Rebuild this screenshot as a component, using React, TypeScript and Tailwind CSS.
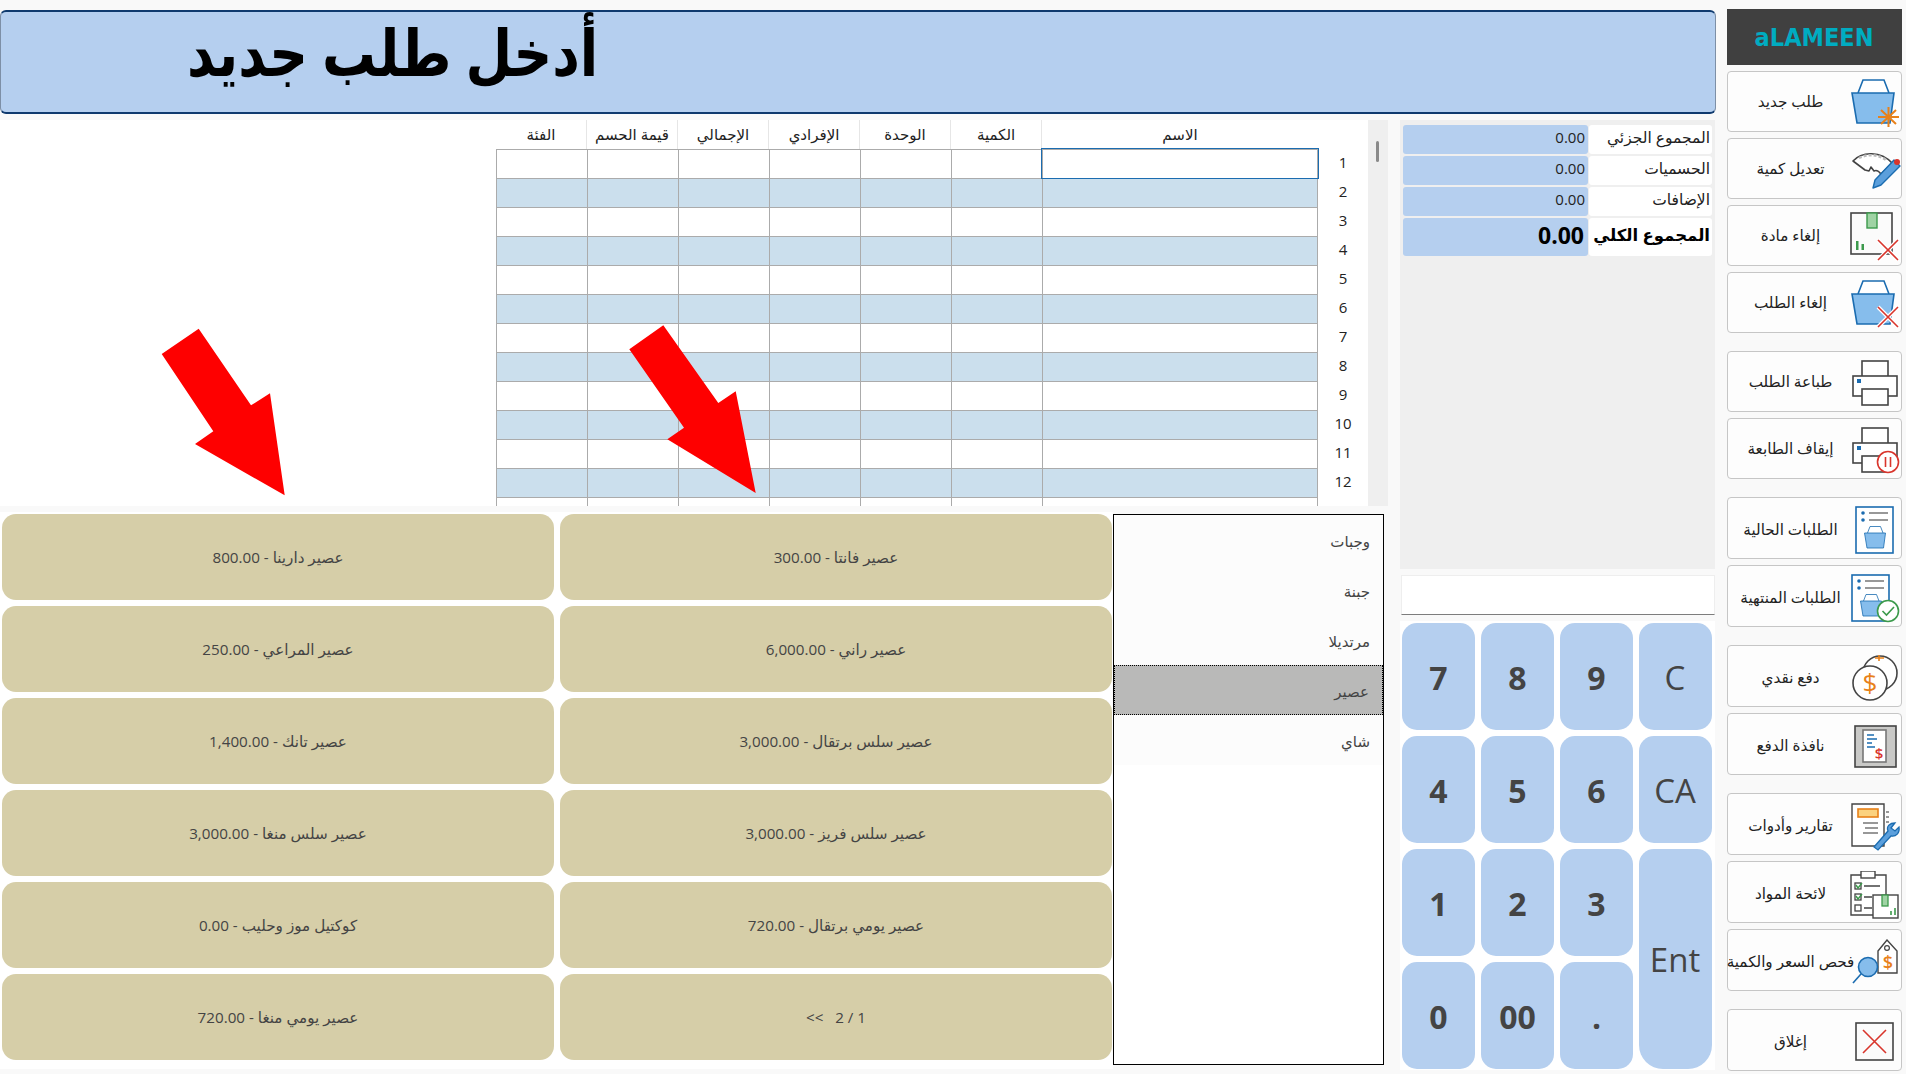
import React from "react";

const F = '"Open Sans","DejaVu Sans",sans-serif';

const products = [
  ["عصير دارينا - 800.00", "عصير فانتا - 300.00"],
  ["عصير المراعي - 250.00", "عصير راني - 6,000.00"],
  ["عصير تانك - 1,400.00", "عصير سلس برتقال - 3,000.00"],
  ["عصير سلس منغا - 3,000.00", "عصير سلس فريز - 3,000.00"],
  ["كوكتيل موز وحليب - 0.00", "عصير يومي برتقال - 720.00"],
  ["عصير يومي منغا - 720.00", "1 / 2   >>"],
];

const Basket = ({ x = 0, y = 0, s = 1 }: { x?: number; y?: number; s?: number }) => (
  <g transform={`translate(${x} ${y}) scale(${s})`}>
    <path d="M7 14 L12 1 H33 L38 14" fill="#fff" stroke="#1b6cb0" strokeWidth="1.6" />
    <path d="M1 14 H43 L39 44 H6 Z" fill="#86bdec" stroke="#1b6cb0" strokeWidth="1.6" />
  </g>
);
const RedX = ({ x, y, s = 20 }: { x: number; y: number; s?: number }) => (
  <g>
    <path d={`M${x} ${y} L${x + s} ${y + s} M${x + s} ${y} L${x} ${y + s}`} stroke="#fff" strokeWidth="4" />
    <path d={`M${x} ${y} L${x + s} ${y + s} M${x + s} ${y} L${x} ${y + s}`} stroke="#d9352c" strokeWidth="1.6" />
  </g>
);
const Printer = () => (
  <g fill="#fff" stroke="#444" strokeWidth="1.6">
    <rect x="12" y="1" width="26" height="16" />
    <rect x="3" y="16" width="44" height="20" />
    <rect x="12" y="29" width="26" height="16" />
    <rect x="7" y="19" width="4" height="4" fill="#1b6cb0" stroke="none" />
  </g>
);
const ListDoc = ({ x }: { x: number }) => (
  <g transform={`translate(${x} 0)`}>
    <rect x="1" y="1" width="37" height="46" fill="#fff" stroke="#1b6cb0" strokeWidth="1.6" />
    <circle cx="8" cy="7" r="1.8" fill="#1b6cb0" />
    <circle cx="8" cy="14" r="1.8" fill="#1b6cb0" />
    <path d="M14 7 H33 M14 14 H33" stroke="#777" strokeWidth="1.4" />
    <Basket x={9} y={20} s={0.5} />
  </g>
);

const icons: Record<string, React.ReactNode> = {
  new: (
    <>
      <Basket x={1} y={1} />
      <path d="M28 39 H49 M38.5 29 V49 M31 32 L46 46 M46 32 L31 46" stroke="#e8811a" strokeWidth="2" />
    </>
  ),
  qty: (
    <>
      <path d="M3 16 C12 6 31 6 42 18 L31 29 C28 25 26 25 24 26 L21 22 L19 26 L15 25 Z" fill="#fff" stroke="#444" strokeWidth="1.6" strokeLinejoin="round" />
      <path d="M9 13 C17 9 28 9 36 15" fill="none" stroke="#bbb" strokeWidth="2.5" strokeDasharray="3 2" />
      <path d="M23 43 L25 35 L44 15 L50 21 L31 40 Z" fill="#5b9fdc" stroke="#1b6cb0" strokeWidth="1.4" strokeLinejoin="round" />
      <circle cx="47" cy="17" r="3" fill="#d9352c" />
    </>
  ),
  cancelItem: (
    <>
      <rect x="1" y="1" width="41" height="41" fill="#fbfbfb" stroke="#444" strokeWidth="1.6" />
      <rect x="17" y="1" width="10" height="15" fill="#9fd3a4" stroke="#3c9a4c" strokeWidth="1.4" />
      <path d="M6 29 h2.5 v9 h-2.5z M11.5 32 h2.5 v6 h-2.5z" fill="#3c9a4c" />
      <RedX x={28} y={28} s={20} />
    </>
  ),
  cancelOrder: (
    <>
      <Basket x={1} y={1} />
      <RedX x={28} y={28} s={20} />
    </>
  ),
  print: <Printer />,
  stop: (
    <>
      <Printer />
      <circle cx="38" cy="35" r="10.5" fill="#fff" stroke="#d9352c" strokeWidth="1.6" />
      <path d="M35.5 30 V40 M40.5 30 V40" stroke="#d9352c" strokeWidth="1.6" />
    </>
  ),
  current: <ListDoc x={5} />,
  done: (
    <>
      <ListDoc x={1} />
      <circle cx="38" cy="37" r="10.5" fill="#fff" stroke="#3c9a4c" strokeWidth="1.6" />
      <path d="M32.5 37 L36.5 41 L44 33" fill="none" stroke="#3c9a4c" strokeWidth="1.6" />
    </>
  ),
  cash: (
    <>
      <circle cx="30" cy="19" r="17" fill="#fff" stroke="#444" strokeWidth="1.6" />
      <path d="M29 1 V7 M25 4 H34" stroke="#e8811a" strokeWidth="1.6" />
      <circle cx="20" cy="29" r="17" fill="#fff" stroke="#444" strokeWidth="1.6" />
      <text x="20" y="38" fontSize="26" textAnchor="middle" fill="#e8811a" fontFamily="Open Sans">$</text>
    </>
  ),
  payWin: (
    <>
      <rect x="1" y="1" width="41" height="41" fill="#c9c9c7" stroke="#444" strokeWidth="1.6" />
      <rect x="9" y="5" width="23" height="32" fill="#fff" stroke="#777" strokeWidth="1.6" />
      <path d="M13 10 h7 M13 14 h10 M13 18 h5 M13 22 h8" stroke="#1b6cb0" strokeWidth="1.6" />
      <text x="25" y="34" fontSize="15" textAnchor="middle" fill="#d9352c" fontFamily="Open Sans" fontWeight="600">$</text>
    </>
  ),
  reports: (
    <>
      <path d="M1 1 H33 V43 H1 Z" fill="#fff" stroke="#444" strokeWidth="1.4" />
      <rect x="7" y="6" width="20" height="8" fill="#fbd27f" stroke="#e8811a" strokeWidth="1.6" />
      <path d="M12 20 H27 M14 25 H27 M12 30 H27 M35 9 H38 M35 14 H38 M35 19 H38" stroke="#777" strokeWidth="1.3" />
      <path d="M23 44 L37 28 C35 23 39 20 44 20 L40 25 L44 28 L48 24 C49 30 45 34 40 33 L27 47 Z" fill="#5b9fdc" stroke="#1b6cb0" strokeWidth="1.3" />
    </>
  ),
  items: (
    <>
      <path d="M1 4 H36 V44 H1 Z" fill="#fff" stroke="#444" strokeWidth="1.4" />
      <rect x="11" y="0" width="14" height="7" fill="#fff" stroke="#444" strokeWidth="1.4" />
      <rect x="5" y="12" width="6" height="6" fill="#fff" stroke="#444" strokeWidth="1.3" />
      <rect x="5" y="23" width="6" height="6" fill="#fff" stroke="#444" strokeWidth="1.3" />
      <rect x="5" y="34" width="6" height="6" fill="#fff" stroke="#444" strokeWidth="1.3" />
      <path d="M6 14 L8 17 L12 12 M6 25 L8 28 L12 23" fill="none" stroke="#3c9a4c" strokeWidth="1.4" />
      <path d="M14 15 H30 M14 26 H22 M14 37 H22" stroke="#444" strokeWidth="1.3" />
      <rect x="23" y="24" width="25" height="23" fill="#fff" stroke="#444" strokeWidth="1.4" />
      <rect x="32" y="24" width="6" height="11" fill="#9fd3a4" stroke="#3c9a4c" strokeWidth="1.3" />
      <path d="M41 44 v-4 M45 44 v-7" stroke="#3c9a4c" strokeWidth="1.6" />
    </>
  ),
  check: (
    <>
      <path d="M28 12 L37 1 L47 12 V34 H28 Z" fill="#fff" stroke="#444" strokeWidth="1.4" />
      <circle cx="37" cy="9" r="2.4" fill="#fff" stroke="#444" strokeWidth="1.2" />
      <text x="38" y="30" fontSize="18" textAnchor="middle" fill="#e8811a" fontFamily="Open Sans" fontWeight="600">$</text>
      <circle cx="18" cy="28" r="9.5" fill="#86bdec" stroke="#1b6cb0" strokeWidth="1.6" />
      <path d="M11 35 L3 44" stroke="#1b6cb0" strokeWidth="1.6" />
    </>
  ),
  close: (
    <>
      <rect x="1" y="1" width="37" height="37" fill="#fbfbfb" stroke="#444" strokeWidth="1.6" />
      <path d="M8 8 L31 31 M31 8 L8 31" stroke="#d9352c" strokeWidth="1.6" />
    </>
  ),
};

const side: { t: string; i: string; h: string; mt: string; ox: string; oy: string; tp: string }[] = [
  { t: "طلب جديد", i: "new", h: "h-[61px]", mt: "mt-[6px]", ox: "-ml-[3px]", oy: "mt-[6px]", tp: "" },
  { t: "تعديل كمية", i: "qty", h: "h-[61px]", mt: "mt-[6px]", ox: "-ml-[3px]", oy: "mt-[6px]", tp: "" },
  { t: "إلغاء مادة", i: "cancelItem", h: "h-[61px]", mt: "mt-[6px]", ox: "-ml-[3px]", oy: "mt-[6px]", tp: "" },
  { t: "إلغاء الطلب", i: "cancelOrder", h: "h-[61px]", mt: "mt-[6px]", ox: "-ml-[3px]", oy: "mt-[6px]", tp: "" },
  { t: "طباعة الطلب", i: "print", h: "h-[61px]", mt: "mt-[18px]", ox: "-ml-[3px]", oy: "mt-[8px]", tp: "" },
  { t: "إيقاف الطابعة", i: "stop", h: "h-[61px]", mt: "mt-[6px]", ox: "-ml-[3px]", oy: "mt-[8px]", tp: "" },
  { t: "الطلبات الحالية", i: "current", h: "h-[62px]", mt: "mt-[18px]", ox: "-ml-[3px]", oy: "mt-[8px]", tp: "pt-[2px]" },
  { t: "الطلبات المنتهية", i: "done", h: "h-[62px]", mt: "mt-[6px]", ox: "-ml-[3px]", oy: "mt-[8px]", tp: "pt-[2px]" },
  { t: "دفع نقدي", i: "cash", h: "h-[62px]", mt: "mt-[18px]", ox: "-ml-[3px]", oy: "mt-[8px]", tp: "pt-[2px]" },
  { t: "نافذة الدفع", i: "payWin", h: "h-[62px]", mt: "mt-[6px]", ox: "ml-[1px]", oy: "mt-[11px]", tp: "pt-[2px]" },
  { t: "تقارير وأدوات", i: "reports", h: "h-[62px]", mt: "mt-[18px]", ox: "-ml-[2px]", oy: "mt-[9px]", tp: "pt-[2px]" },
  { t: "لائحة المواد", i: "items", h: "h-[62px]", mt: "mt-[6px]", ox: "-ml-[3px]", oy: "mt-[9px]", tp: "pt-[2px]" },
  { t: "فحص السعر والكمية", i: "check", h: "h-[62px]", mt: "mt-[6px]", ox: "-ml-[3px]", oy: "mt-[9px]", tp: "pt-[2px]" },
  { t: "إغلاق", i: "close", h: "h-[62px]", mt: "mt-[18px]", ox: "ml-[2px]", oy: "mt-[12px]", tp: "pt-[2px]" },
];

const columns = ["الفئة", "قيمة الحسم", "الإجمالي", "الإفرادي", "الوحدة", "الكمية"];
const rowNums = Array.from({ length: 13 }, (_, i) => i);

const Totals = ({ label, value, big }: { label: string; value: string; big?: boolean }) => (
  <div className={`flex gap-px ${big ? "h-[38px]" : "h-[29px]"}`}>
    <div className={`w-[185px] rounded-[3px] bg-[#b5cfef] flex items-center justify-end pb-[4px] ${big ? "pr-[4px] text-[23px] font-bold text-black" : "pr-[3px] text-[15px] text-[#222]"}`}>
      {value}
    </div>
    <div dir="rtl" className={`w-[123px] rounded-[3px] bg-white flex items-center pr-[2px] pb-[3px] ${big ? "text-[16.5px] font-bold text-black" : "text-[15.5px] text-[#222]"}`}>
      {label}
    </div>
  </div>
);

const Key = ({ t, bold, cls = "" }: { t: string; bold?: boolean; cls?: string }) => (
  <div className={`w-[73px] h-[107px] rounded-[15px] bg-[#b5cfef] flex items-center justify-center pt-[2px] text-[#444] ${bold ? "text-[32px] font-bold" : "text-[33px] pr-[1px]"} ${cls}`}>
    {t}
  </div>
);

const Arrow = ({ cls, w, h, pts }: { cls: string; w: number; h: number; pts: string }) => (
  <svg className={`absolute ${cls}`} width={w} height={h} viewBox={`0 0 ${w} ${h}`}>
    <polygon points={pts} fill="#fe0000" />
  </svg>
);

export default function App() {
  return (
    <div className="relative w-[1906px] h-[1074px] overflow-hidden bg-[#f9f9f9] flex" style={{ fontFamily: F }}>
      <div className="w-[1716px] flex flex-col shrink-0">
        <div className="mt-[10px] h-[104px] rounded-[6px] bg-[#b5cfef] border border-[#7d8fa6] border-y-2 border-y-[#0f3a6e] flex items-center pl-[220px] pb-[20px]">
          <span dir="rtl" className="w-[410px] text-center text-[64px] font-bold text-black leading-none whitespace-nowrap scale-x-[0.84]">أدخل طلب جديد</span>
        </div>
        <div className="flex mt-[6px] flex-1">
          <div className="w-[1400px] flex flex-col shrink-0">
            <div className="flex h-[386px] w-[1388px] bg-white overflow-hidden">
              <div className="w-[496px] shrink-0" />
              <div className="flex flex-col w-[822px] shrink-0">
                <div className="flex h-[30px] shrink-0 text-[15px] text-[#222] border-b border-[#ababab]">
                  {columns.map((c) => (
                    <div key={c} dir="rtl" className="w-[91px] border-r border-[#e6e6e6] flex items-center justify-center">{c}</div>
                  ))}
                  <div dir="rtl" className="w-[276px] flex items-center justify-center">الاسم</div>
                </div>
                {rowNums.map((r) => (
                  <div key={r} className={`flex h-[29px] shrink-0 border-b border-[#ababab] ${r % 2 === 1 ? "bg-[#cbdfed]" : "bg-white"}`}>
                    {columns.map((c) => (
                      <div key={c} className="w-[91px] border-l border-[#ababab]" />
                    ))}
                    <div className={`w-[276px] border-x border-[#ababab] ${r === 0 ? "outline outline-1 outline-[#1b6cb0] -mt-px" : ""}`} />
                  </div>
                ))}
              </div>
              <div className="w-[50px] shrink-0 flex flex-col pt-[29px] text-[15px] text-[#222] text-center">
                {Array.from({ length: 12 }, (_, i) => (
                  <div key={i} className="h-[29px] shrink-0 flex items-center justify-center pb-[3px]">{i + 1}</div>
                ))}
              </div>
              <div className="w-[20px] shrink-0 bg-[#efefef] relative">
                <div className="absolute left-[8px] top-[21px] w-[3px] h-[21px] bg-[#8a8a8a] rounded-[2px]" />
              </div>
            </div>
            <div className="flex mt-[6px] h-[557px]">
              <div className="w-[1113px] bg-white grid grid-cols-2 gap-x-[6px] gap-y-[6px] pl-[2px] pt-[2px] pr-[1px] grid-rows-[repeat(6,86px)] shrink-0">
                {products.flat().map((p, i) => (
                  <div key={i} dir="rtl" className="rounded-[14px] bg-[#d6cea8] flex items-center justify-center pt-[1px] text-[15.2px] text-[#444] whitespace-pre">{p}</div>
                ))}
              </div>
              <div className="w-[271px] h-[551px] mt-[2px] border border-black bg-white shrink-0">
                {["وجبات", "جبنة", "مرتديلا", "عصير", "شاي"].map((c) => (
                  <div key={c} dir="rtl" className={`h-[50px] pr-[13px] pt-[3px] flex items-center text-[15px] text-[#444] ${c === "عصير" ? "bg-[#b9b9b8] border border-dotted border-black" : "bg-[#fcfcfc]"}`}>{c}</div>
                ))}
              </div>
            </div>
          </div>
          <div className="w-[315px] flex flex-col shrink-0">
            <div className="h-[449px] bg-[#efefef] pl-[3px] pt-[5px] flex flex-col gap-[2px]">
              <Totals label="المجموع الجزئي" value="0.00" />
              <Totals label="الحسميات" value="0.00" />
              <Totals label="الإضافات" value="0.00" />
              <Totals label="المجموع الكلي" value="0.00" big />
            </div>
            <div className="mt-[6px] h-[40px] bg-white border border-[#eee] border-b-[#7d7d7d] ml-px" />
            <div className="mt-[6px] h-[449px] bg-white pl-[2px] pt-[2px] grid grid-cols-[repeat(4,73px)] grid-rows-[repeat(4,107px)] gap-[6px]">
              <Key t="7" bold /><Key t="8" bold /><Key t="9" bold /><Key t="C" />
              <Key t="4" bold /><Key t="5" bold /><Key t="6" bold /><Key t="CA" />
              <Key t="1" bold /><Key t="2" bold /><Key t="3" bold />
              <Key t="Ent" cls="row-span-2 h-[220px] rounded-b-[24px]" />
              <Key t="0" bold /><Key t="00" bold /><Key t="." bold />
            </div>
          </div>
        </div>
      </div>
      <div className="ml-[11px] w-[175px] pt-[9px] flex flex-col shrink-0">
        <div className="h-[56px] bg-[#404040] flex items-center justify-center shrink-0">
          <span className="text-[#00acc1] text-[25px] font-bold leading-none scale-x-[0.9]" style={{ fontFamily: '"DejaVu Sans",sans-serif' }}>aLAMEEN</span>
        </div>
        {side.map((b) => (
          <div key={b.i} className={`${b.h} ${b.mt} shrink-0 rounded-[4px] bg-[#fdfdfd] border border-[#c6c6c6] flex`}>
            <div dir="rtl" className={`w-[125px] shrink-0 flex items-center justify-center text-[15.2px] text-[#222] whitespace-nowrap ${b.tp}`}>{b.t}</div>
            <svg className={`${b.oy} ${b.ox} shrink-0`} width="52" height="52" viewBox="0 0 52 52">{icons[b.i]}</svg>
          </div>
        ))}
      </div>
      <Arrow cls="left-[160px] top-[328px]" w={126} h={168} pts="1.7,26 38.7,0.7 91,77.3 110,65.3 124.7,167.3 35,116 53.3,103.3" />
      <Arrow cls="left-[628px] top-[324px]" w={130} h={170} pts="1.3,25.3 35.3,1.3 90.3,79 107.7,67.3 127.7,169 39.3,115.3 56,103.7" />
    </div>
  );
}
